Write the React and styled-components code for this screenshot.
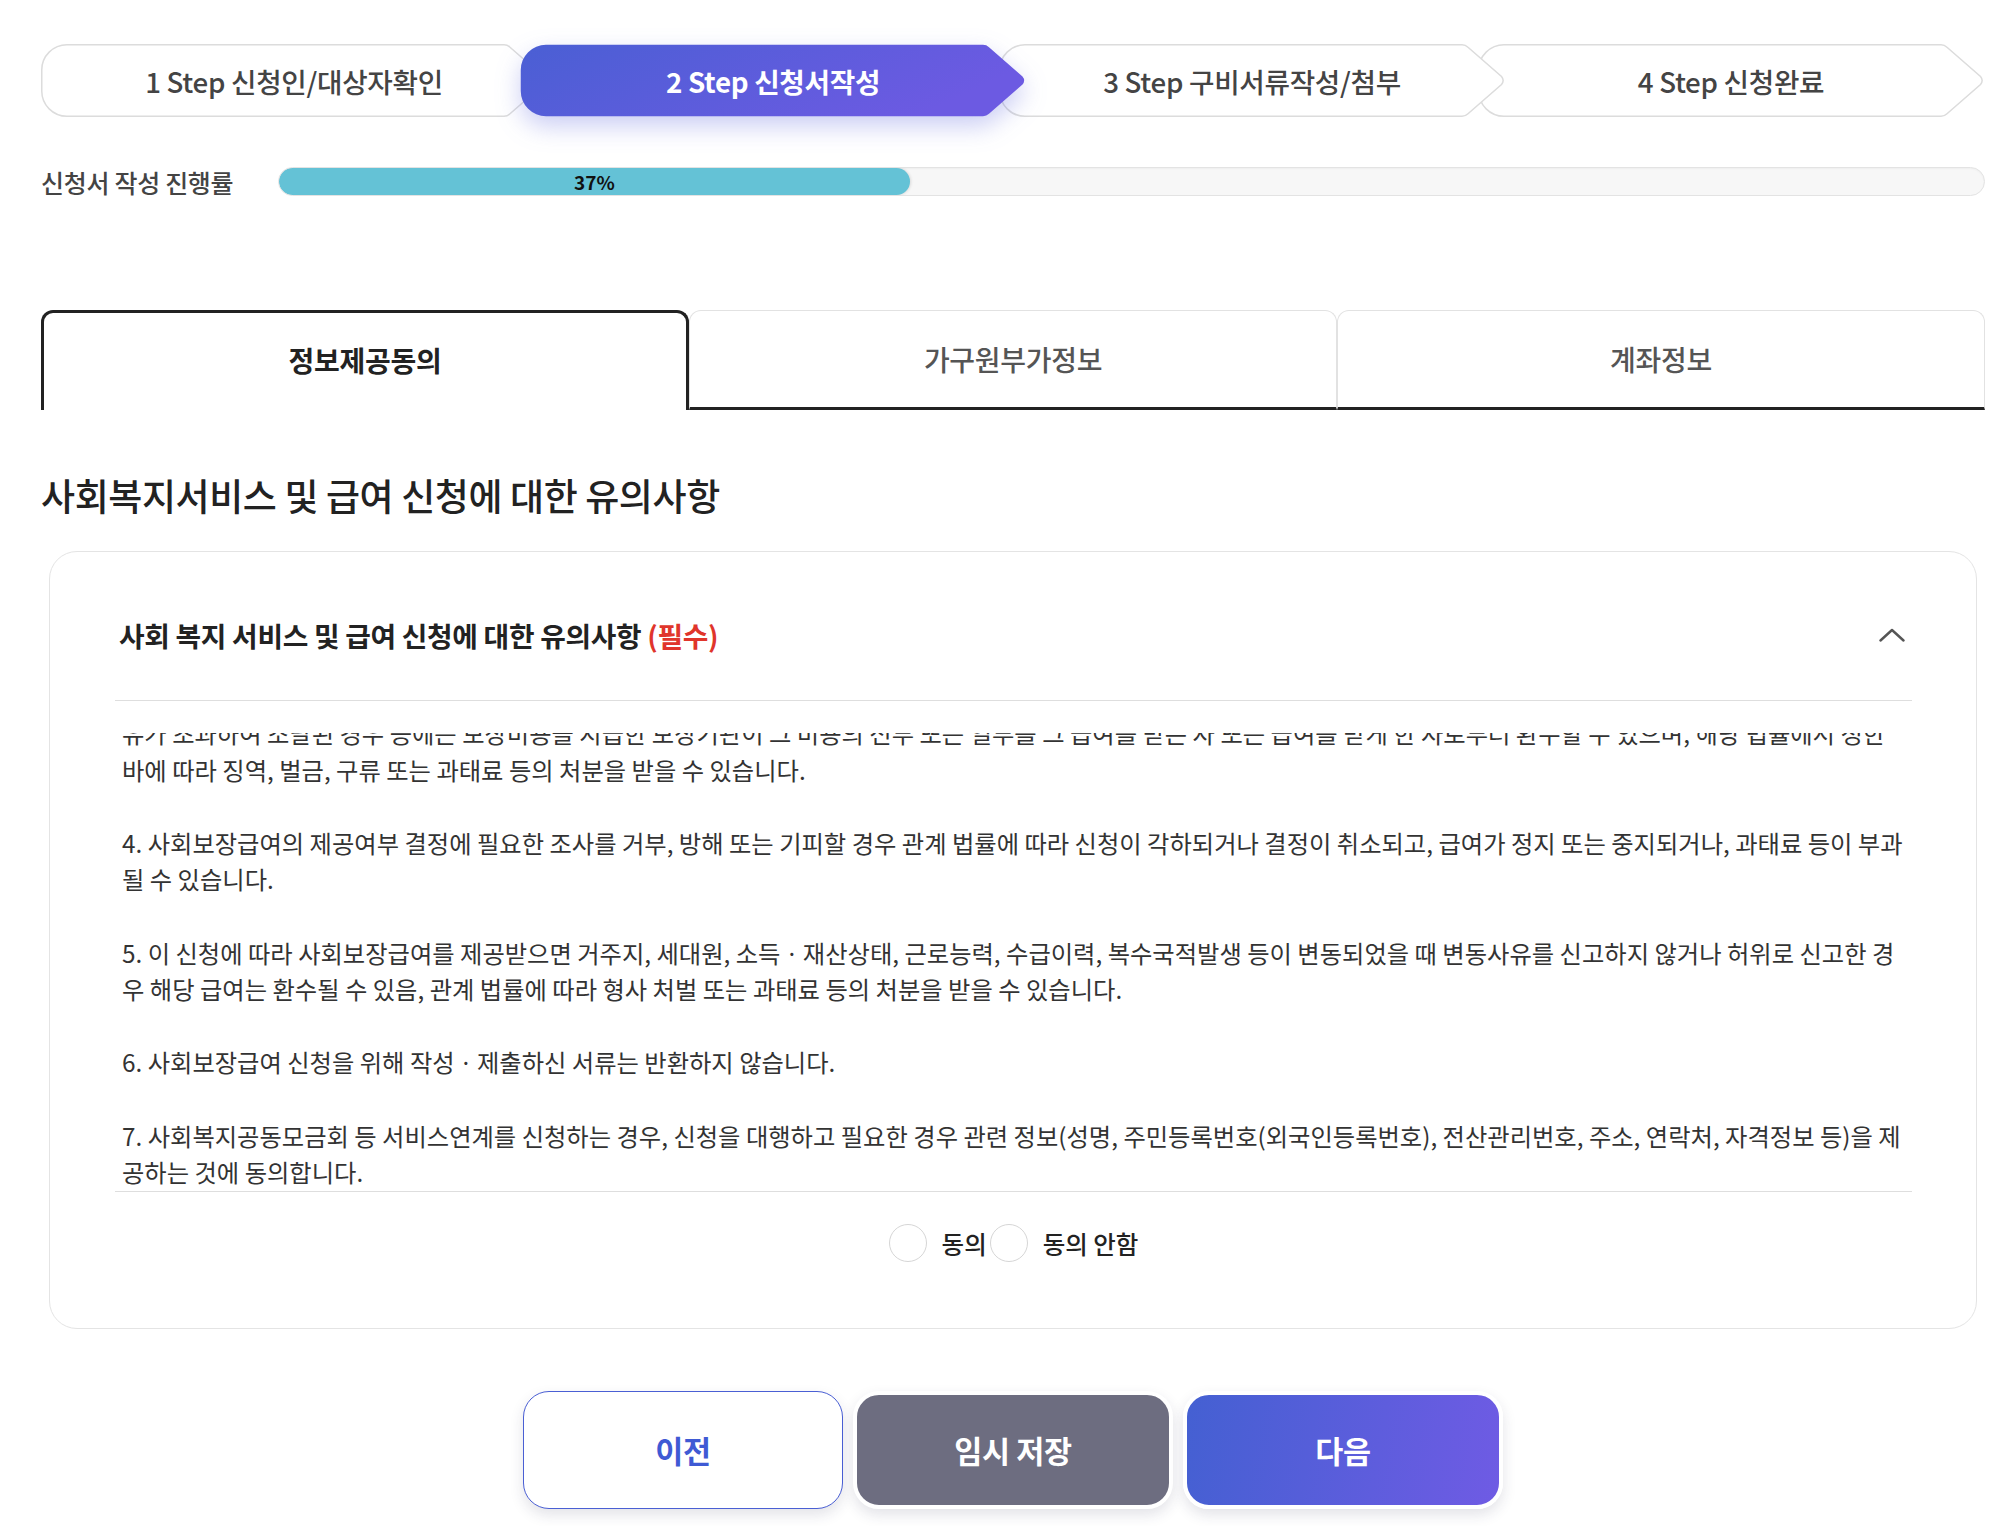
import React, { useLayoutEffect, useRef, useState } from "react";
import styled, { createGlobalStyle } from "styled-components";

const GlobalStyle = createGlobalStyle`
  html, body { margin: 0; padding: 0; background: #ffffff; }
  body {
    font-family: "Noto Sans CJK KR", "Noto Sans", sans-serif;
    color: #222;
    -webkit-font-smoothing: antialiased;
  }
  * { box-sizing: border-box; }
`;

const Page = styled.div`
  padding: 44px 21px 18px 41px;
  width: 2006px;
`;

const Steps = styled.div`
  display: flex;
  height: 73px;
`;

const Step = styled.div`
  position: relative;
  flex: none;
  width: 506px;
  height: 73px;
  margin-left: ${(p) => (p.$first ? "0" : "-27px")};
  z-index: ${(p) => p.$z};
  display: flex;
  align-items: center;
  justify-content: center;
`;

const StepSvg = styled.svg`
  position: absolute;
  inset: 0;
  overflow: visible;
  filter: ${(p) => (p.$active ? "drop-shadow(0 10px 12px rgba(84, 92, 220, 0.3))" : "none")};
`;

const StepLabel = styled.span`
  position: relative;
  font-size: 27.7px;
  font-weight: ${(p) => (p.$active ? 700 : 500)};
  color: ${(p) => (p.$active ? "#ffffff" : "#444444")};
  letter-spacing: -0.3px;
  white-space: nowrap;
`;

const ProgressRow = styled.div`
  display: flex;
  align-items: center;
  margin-top: 50px;
  height: 29px;
`;

const ProgressLabel = styled.div`
  flex: none;
  width: 237px;
  font-size: 25px;
  font-weight: 500;
  color: #444;
  letter-spacing: -0.3px;
`;

const Track = styled.div`
  flex: 1;
  height: 29px;
  border-radius: 15px;
  background: #f7f7f7;
  border: 1px solid #e3e3e3;
  box-shadow: inset 0 1px 2px rgba(0, 0, 0, 0.04);
  overflow: hidden;
`;

const Fill = styled.div`
  height: 100%;
  border-radius: 15px;
  background: #64c2d6;
  box-shadow: 1px 0 3px rgba(0, 0, 0, 0.12);
  display: flex;
  align-items: center;
  justify-content: center;
  font-size: 19px;
  font-weight: 700;
  color: #111;
`;

const Tabs = styled.div`
  display: grid;
  grid-template-columns: repeat(3, 1fr);
  margin-top: 114px;
`;

const Tab = styled.button`
  height: 100px;
  font-family: inherit;
  font-size: 28px;
  letter-spacing: -0.3px;
  background: #fff;
  border-radius: 12px 12px 0 0;
  cursor: pointer;
  padding: 0;
  ${(p) =>
    p.$active
      ? `
    border: 3px solid #222;
    border-bottom: none;
    font-weight: 700;
    color: #222;
    padding-bottom: 3px;
  `
      : `
    border: 1px solid #e2e2e2;
    border-bottom: 3px solid #222;
    font-weight: 500;
    color: #555;
  `}
`;

const Heading = styled.h2`
  margin: 61px 0 32px;
  font-size: 37px;
  line-height: 48px;
  font-weight: 500;
  color: #222;
  letter-spacing: -0.4px;
`;

const Card = styled.section`
  margin: 0 8px;
  border: 1px solid #e4e4e4;
  border-radius: 28px;
  padding: 0 64px 66px 65px;
  background: #fff;
`;

const CardHeader = styled.div`
  display: flex;
  align-items: center;
  justify-content: space-between;
  padding: 64px 7px 46px 4px;
  border-bottom: 1px solid #dedede;
`;

const CardTitle = styled.h3`
  margin: 0;
  font-size: 27.8px;
  line-height: 38px;
  font-weight: 700;
  color: #222;
  letter-spacing: -0.3px;
`;

const Required = styled.span`
  color: #e0352b;
`;

const Chevron = styled.svg`
  width: 26px;
  height: 14px;
  flex: none;
`;

const ScrollBox = styled.div`
  margin-top: 32px;
  height: 459px;
  overflow-y: auto;
  padding: 0 9px 0 7px;
  border-bottom: 1px solid #dedede;
  scrollbar-width: none;
  &::-webkit-scrollbar { display: none; }
`;

const Para = styled.p`
  margin: 0 0 36.6px;
  font-size: 24.3px;
  line-height: 36.6px;
  color: #333;
  &:last-child { margin-bottom: 0; }
`;

const RadioRow = styled.div`
  display: flex;
  justify-content: center;
  gap: 3px;
  padding-top: 32px;
`;

const Option = styled.label`
  display: flex;
  align-items: center;
  gap: 15px;
  font-size: 24.5px;
  font-weight: 500;
  color: #222;
  cursor: pointer;
`;

const Radio = styled.input`
  appearance: none;
  margin: 0;
  width: 38px;
  height: 38px;
  border-radius: 50%;
  border: 1.5px solid #d6d6d6;
  background: #fff;
  cursor: pointer;
  &:checked {
    border: 11px solid #4a5fd4;
  }
`;

const Buttons = styled.div`
  display: flex;
  justify-content: center;
  gap: 10px;
  margin-top: 62px;
`;

const Button = styled.button`
  width: 320px;
  height: 118px;
  border-radius: 26px;
  font-family: inherit;
  font-size: 30.5px;
  font-weight: 700;
  letter-spacing: -0.3px;
  cursor: pointer;
  box-shadow: 0 6px 14px rgba(40, 40, 80, 0.13);
  ${(p) =>
    p.$variant === "outline"
      ? `
    background: #fff;
    border: 1px solid #4a5fd4;
    color: #3f5ad4;
  `
      : p.$variant === "gray"
      ? `
    background: #6d6d80;
    border: 4px solid #fff;
    color: #fff;
  `
      : `
    background: linear-gradient(100deg, #4460d2 0%, #6f5be4 100%);
    border: 4px solid #fff;
    color: #fff;
  `}
`;

const stepPath =
  "M26 0.75 H463 Q466.5 0.75 469 3.2 L502.5 32.5 Q505.8 36.5 502.5 40.5 L469 69.8 Q466.5 72.25 463 72.25 H26 A25.25 25.25 0 0 1 0.75 47 V26 A25.25 25.25 0 0 1 26 0.75 Z";

function StepItem({ index, label, active }) {
  const z = active ? 20 : 10 - index;
  return (
    <Step $first={index === 0} $z={z}>
      <StepSvg viewBox="0 0 506 73" width="506" height="73" $active={active}>
        {active && (
          <defs>
            <linearGradient id="stepGrad" x1="0" y1="0" x2="1" y2="0.3">
              <stop offset="0" stopColor="#4a5fd4" />
              <stop offset="1" stopColor="#6c5ae2" />
            </linearGradient>
          </defs>
        )}
        <path
          d={stepPath}
          fill={active ? "url(#stepGrad)" : "#ffffff"}
          stroke={active ? "none" : "#dcdcdc"}
          strokeWidth="1.5"
        />
      </StepSvg>
      <StepLabel $active={active}>{label}</StepLabel>
    </Step>
  );
}

const steps = [
  "1 Step 신청인/대상자확인",
  "2 Step 신청서작성",
  "3 Step 구비서류작성/첨부",
  "4 Step 신청완료",
];

const tabs = ["정보제공동의", "가구원부가정보", "계좌정보"];

export default function App() {
  const scrollRef = useRef(null);
  const [tab, setTab] = useState(0);
  const [agree, setAgree] = useState("");

  useLayoutEffect(() => {
    if (scrollRef.current) {
      scrollRef.current.scrollTop = scrollRef.current.scrollHeight;
    }
  }, []);

  const progress = 37;

  return (
    <>
      <GlobalStyle />
      <Page>
        <Steps>
          {steps.map((s, i) => (
            <StepItem key={s} index={i} label={s} active={i === 1} />
          ))}
        </Steps>

        <ProgressRow>
          <ProgressLabel>신청서 작성 진행률</ProgressLabel>
          <Track>
            <Fill style={{ width: `${progress}%` }}>{progress}%</Fill>
          </Track>
        </ProgressRow>

        <Tabs>
          {tabs.map((t, i) => (
            <Tab key={t} $active={i === tab} onClick={() => setTab(i)}>
              {t}
            </Tab>
          ))}
        </Tabs>

        <Heading>사회복지서비스 및 급여 신청에 대한 유의사항</Heading>

        <Card>
          <CardHeader>
            <CardTitle>
              사회 복지 서비스 및 급여 신청에 대한 유의사항 <Required>(필수)</Required>
            </CardTitle>
            <Chevron viewBox="0 0 26 14">
              <polyline
                points="1.5,12.5 13,2 24.5,12.5"
                fill="none"
                stroke="#555"
                strokeWidth="2.4"
                strokeLinecap="round"
                strokeLinejoin="round"
              />
            </Chevron>
          </CardHeader>

          <ScrollBox ref={scrollRef}>
            <Para>
              1. 사회보장급여의 신청은 본인 또는 대리인이 할 수 있으며, 신청 시 제출한 정보는 사회보장급여의 제공여부 결정 및 사후관리를 위하여 활용됩니다.
            </Para>
            <Para>
              2. 사회보장급여를 신청하면 수급자격 확인을 위하여 신청인 및 가구원의 소득ㆍ재산 등에 관한 조사를 실시하며, 필요한 경우 관계 기관에 자료를 요청할 수 있습니다.
            </Para>
            <Para>
              3. 거짓이나 그 밖의 부정한 방법으로 사회보장급여를 받거나 타인으로 하여금 받게 한 경우, 또는 급여를 받은 이후 소득ㆍ재산 등의 변동으로 지급기준을 초과하게 된 사
              <br />
              유가 초과하여 조달된 경우 등에는 보장비용을 지급한 보장기관이 그 비용의 전부 또는 일부를 그 급여를 받은 자 또는 급여를 받게 한 자로부터 환수할 수 있으며, 해당 법률에서 정한 바에 따라 징역, 벌금, 구류 또는 과태료 등의 처분을 받을 수 있습니다.
            </Para>
            <Para>
              4. 사회보장급여의 제공여부 결정에 필요한 조사를 거부, 방해 또는 기피할 경우 관계 법률에 따라 신청이 각하되거나 결정이 취소되고, 급여가 정지 또는 중지되거나, 과태료 등이 부과될 수 있습니다.
            </Para>
            <Para>
              5. 이 신청에 따라 사회보장급여를 제공받으면 거주지, 세대원, 소득ㆍ재산상태, 근로능력, 수급이력, 복수국적발생 등이 변동되었을 때 변동사유를 신고하지 않거나 허위로 신고한 경우 해당 급여는 환수될 수 있음, 관계 법률에 따라 형사 처벌 또는 과태료 등의 처분을 받을 수 있습니다.
            </Para>
            <Para>6. 사회보장급여 신청을 위해 작성ㆍ제출하신 서류는 반환하지 않습니다.</Para>
            <Para>
              7. 사회복지공동모금회 등 서비스연계를 신청하는 경우, 신청을 대행하고 필요한 경우 관련 정보(성명, 주민등록번호(외국인등록번호), 전산관리번호, 주소, 연락처, 자격정보 등)을 제공하는 것에 동의합니다.
            </Para>
          </ScrollBox>

          <RadioRow>
            <Option>
              <Radio
                type="radio"
                name="agree"
                checked={agree === "yes"}
                onChange={() => setAgree("yes")}
              />
              동의
            </Option>
            <Option>
              <Radio
                type="radio"
                name="agree"
                checked={agree === "no"}
                onChange={() => setAgree("no")}
              />
              동의 안함
            </Option>
          </RadioRow>
        </Card>

        <Buttons>
          <Button $variant="outline">이전</Button>
          <Button $variant="gray">임시 저장</Button>
          <Button $variant="primary">다음</Button>
        </Buttons>
      </Page>
    </>
  );
}
